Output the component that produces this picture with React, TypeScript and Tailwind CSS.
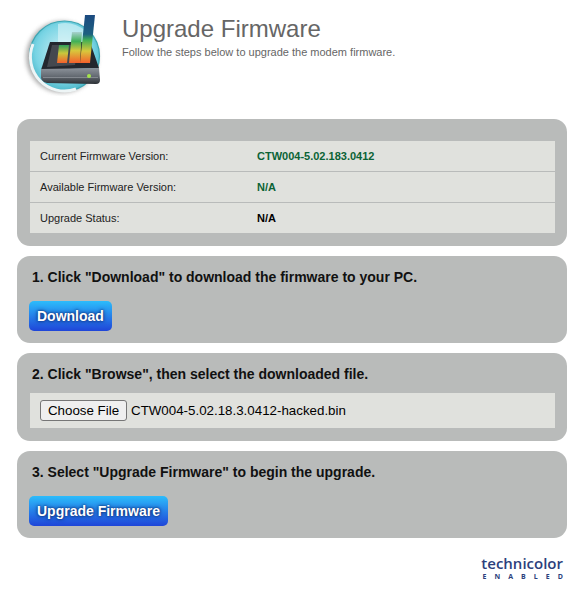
const sans = "font-['Liberation_Sans',Arial,sans-serif]";

function Logo() {
  return (
    <svg width="84" height="84" viewBox="21 12 84 84" className="shrink-0">
      <defs>
        <radialGradient id="glass" cx="50%" cy="45%" r="55%">
          <stop offset="0" stopColor="#d2f1f5" />
          <stop offset="0.75" stopColor="#78d4e4" />
          <stop offset="1" stopColor="#4cb6c8" />
        </radialGradient>
        <linearGradient id="bar" x1="0" y1="0" x2="0" y2="1">
          <stop offset="0" stopColor="#2f9e58" />
          <stop offset="0.45" stopColor="#c8c83c" />
          <stop offset="1" stopColor="#f4602c" />
        </linearGradient>
        <linearGradient id="bar2" x1="0" y1="0" x2="0" y2="1">
          <stop offset="0" stopColor="#a8d0d0" />
          <stop offset="0.3" stopColor="#3fb058" />
          <stop offset="0.6" stopColor="#d8c83c" />
          <stop offset="1" stopColor="#f4602c" />
        </linearGradient>
        <linearGradient id="bar3" x1="0" y1="0" x2="0" y2="1">
          <stop offset="0" stopColor="#1c4a80" />
          <stop offset="0.4" stopColor="#1c6080" />
          <stop offset="0.52" stopColor="#3fae54" />
          <stop offset="0.75" stopColor="#d8c83c" />
          <stop offset="1" stopColor="#f4602c" />
        </linearGradient>
        <linearGradient id="tray" x1="0" y1="0" x2="0" y2="1">
          <stop offset="0" stopColor="#8c929a" />
          <stop offset="0.5" stopColor="#666c74" />
          <stop offset="1" stopColor="#2c3036" />
        </linearGradient>
        <filter id="blur" x="-20%" y="-20%" width="140%" height="140%">
          <feGaussianBlur stdDeviation="2" />
        </filter>
      </defs>
      <circle cx="62" cy="57" r="36" fill="#777" opacity="0.6" filter="url(#blur)" />
      <circle cx="64.5" cy="56" r="35" fill="url(#glass)" stroke="#3ba7b4" strokeWidth="1.2" />
      <path d="M33 44 A34 34 0 0 0 76 89" fill="none" stroke="#eef5f6" strokeWidth="3" />
      <path d="M58 24 Q72 20 86 31 L82 46 L58 46 Z" fill="#e6f8fa" opacity="0.55" />
      <path d="M50 42 L90 42 L99 68 L41 70 Z" fill="#23272e" />
      <path d="M52 45 L78 45 L75 65 L47 67 Z" fill="#44484f" />
      <path d="M59 45 L69 45 L67 63 L57 63 Z" fill="url(#bar)" />
      <path d="M72 32 L82 32 L80 63 L69 63 Z" fill="url(#bar2)" />
      <path d="M85 15 L95 15 L90 63 L80 63 Z" fill="url(#bar3)" />
      <path d="M41 69 L99 68 L100 80 Q100 84 96 84 L47 83 Q42 82 41 78 Z" fill="url(#tray)" />
      <rect x="43" y="77" width="55" height="1" fill="#b4b8be" opacity="0.45" />
      <circle cx="89" cy="76" r="2" fill="#a4e44c" />
    </svg>
  );
}

function BlueButton({ children }: { children: string }) {
  return (
    <button className="h-[30px] rounded-[5px] bg-[linear-gradient(#2cbcfb,#1f45d8)] px-2 text-[14px] font-bold text-white [text-shadow:0_0_4px_#0b2a70,0_0_2px_#0b2a70]">
      {children}
    </button>
  );
}

const rows = [
  ["Current Firmware Version:", "CTW004-5.02.183.0412", "text-[#0b6336]"],
  ["Available Firmware Version:", "N/A", "text-[#0b6336]"],
  ["Upgrade Status:", "N/A", "text-black"],
];

export default function App() {
  return (
    <div className={`${sans} h-[597px] w-[587px] overflow-hidden bg-white`}>
      <header className="flex h-[119px] pl-[21px] pt-[12px]">
        <Logo />
        <div className="pl-[17px] pt-[2px]">
          <h1 className="text-[24px] leading-[29px] text-[#666]">Upgrade Firmware</h1>
          <p className="mt-[3px] text-[11px] leading-[13px] text-[#666]">
            Follow the steps below to upgrade the modem firmware.
          </p>
        </div>
      </header>

      <main className="ml-[17px] flex w-[550px] flex-col gap-[10px]">
        <section className="h-[127px] rounded-[13px] bg-[#b9bbba] pl-[13px] pr-[12px] pt-[22px]">
          <div className="bg-[#e0e1dd]">
            {rows.map(([label, value, color], i) => (
              <div
                key={label}
                className={`flex items-center pl-[10px] text-[11px] ${i < 2 ? "h-[31px] border-b border-[#b9bbba]" : "h-[30px]"}`}
              >
                <span className="w-[217px] text-[#222]">{label}</span>
                <span className={`font-bold ${color}`}>{value}</span>
              </div>
            ))}
          </div>
        </section>

        <section className="flex h-[87px] flex-col rounded-[13px] bg-[#b9bbba] pl-[12px] pt-[12px]">
          <h2 className="pl-[3px] text-[14px] leading-[18px] font-bold text-[#111]">
            1. Click "Download" to download the firmware to your PC.
          </h2>
          <div className="mt-[15px]">
            <BlueButton>Download</BlueButton>
          </div>
        </section>

        <section className="h-[88px] rounded-[13px] bg-[#b9bbba] pl-[13px] pr-[12px] pt-[12px]">
          <h2 className="pl-[2px] text-[14px] leading-[18px] font-bold text-[#111]">
            2. Click "Browse", then select the downloaded file.
          </h2>
          <div className="mt-[10px] flex h-[35px] items-center bg-[#e0e1dd] pl-[10px] text-[13.33px] text-black">
            <span className="flex h-[21px] w-[87px] items-center justify-center rounded-[3px] border border-[#767676] bg-[#efefef]">
              Choose File
            </span>
            <span className="pl-[4px]">CTW004-5.02.18.3.0412-hacked.bin</span>
          </div>
        </section>

        <section className="flex h-[87px] flex-col rounded-[13px] bg-[#b9bbba] pl-[12px] pt-[12px]">
          <h2 className="pl-[3px] text-[14px] leading-[18px] font-bold text-[#111]">
            3. Select "Upgrade Firmware" to begin the upgrade.
          </h2>
          <div className="mt-[15px]">
            <BlueButton>Upgrade Firmware</BlueButton>
          </div>
        </section>
      </main>

      <footer className="flex flex-col items-end pr-[24px] pt-[17px] font-['Open_Sans',sans-serif] text-[#2c3f7c]">
        <span className="text-[15px] leading-[16px] font-semibold">technicolor</span>
        <span className="mt-[1px] -mr-[8px] text-[7px] leading-[9px] font-bold tracking-[1.15em]">ENABLED</span>
      </footer>
    </div>
  );
}
